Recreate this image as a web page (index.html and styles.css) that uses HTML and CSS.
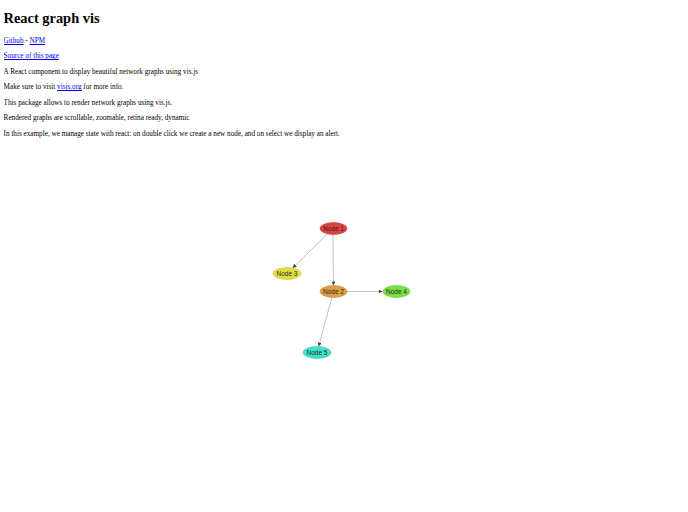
FILE: index.html
```html
<!DOCTYPE html>
<html>
<head>
<meta charset="utf-8">
<title>React graph vis</title>
<link rel="stylesheet" href="styles.css">
</head>
<body>
<h1 class="title">React graph vis</h1>
<p class="para"><a href="#">Github</a> - <a href="#">NPM</a></p>
<p class="para"><a href="#">Source of this page</a></p>
<p class="para">A React component to display beautiful network graphs using vis.js</p>
<p class="para">Make sure to visit <a href="#">visjs.org</a> for more info.</p>
<p class="para">This package allows to render network graphs using vis.js.</p>
<p class="para">Rendered graphs are scrollable, zoomable, retina ready, dynamic</p>
<p class="para">In this example, we manage state with react: on double click we create a new node, and on select we display an alert.</p>
<div class="graph">
<svg class="graph-canvas" width="680" height="300" viewBox="0 0 680 300">
  <defs>
    <marker id="arrow" markerUnits="userSpaceOnUse" markerWidth="5" markerHeight="5" refX="4" refY="2" orient="auto">
      <path d="M0,0 L4,2 L0,4 Z" fill="#444"/>
    </marker>
  </defs>
  <g transform="translate(-4,-144.5)">
    <g class="edges" stroke="#9a9a9a" stroke-width="0.6" fill="none">
      <line x1="333" y1="234" x2="333.4" y2="285" marker-end="url(#arrow)"/>
      <line x1="327.4" y1="233.5" x2="292.6" y2="267.5" marker-end="url(#arrow)"/>
      <line x1="347" y1="291" x2="382.5" y2="291" marker-end="url(#arrow)"/>
      <line x1="331.9" y1="297" x2="318.6" y2="346" marker-end="url(#arrow)"/>
    </g>
    <g class="nodes" stroke-width="0.6">
      <ellipse cx="333.5" cy="228" rx="13.5" ry="6" fill="#e04141" stroke="#c83a3a"/>
      <ellipse cx="287" cy="273" rx="14" ry="6" fill="#e0df41" stroke="#c8c73a"/>
      <ellipse cx="333.5" cy="291" rx="13.5" ry="6" fill="#e09c41" stroke="#c88b3a"/>
      <ellipse cx="396.5" cy="291" rx="13.5" ry="6" fill="#7be041" stroke="#6ec83a"/>
      <ellipse cx="317" cy="352" rx="14" ry="6" fill="#41e0c9" stroke="#3ac8b3"/>
    </g>
    <g class="labels" font-family="'Liberation Sans', Arial, sans-serif" font-size="6.5" fill="#2a2a2a" text-anchor="middle">
      <text x="333.5" y="230.3">Node 1</text>
      <text x="287" y="275.3">Node 3</text>
      <text x="333.5" y="293.3">Node 2</text>
      <text x="396.5" y="293.3">Node 4</text>
      <text x="317" y="354.3">Node 5</text>
    </g>
  </g>
</svg>
</div>
</body>
</html>
```
FILE: styles.css
```css
html {
  background: #ffffff;
}
body {
  margin: 3.6px;
  font-family: "Liberation Serif", "Times New Roman", serif;
  font-size: 7.2px;
  color: #000000;
}
.title {
  font-size: 14.4px;
  font-weight: bold;
  margin: 6.6px 0 9.65px;
}
.para {
  margin: 7.2px 0;
  line-height: 8.3px;
}
.para a {
  color: #0000ee;
  text-decoration: underline;
}
.graph {
  width: 100%;
  height: 300px;
}
.graph-canvas {
  display: block;
}
```
